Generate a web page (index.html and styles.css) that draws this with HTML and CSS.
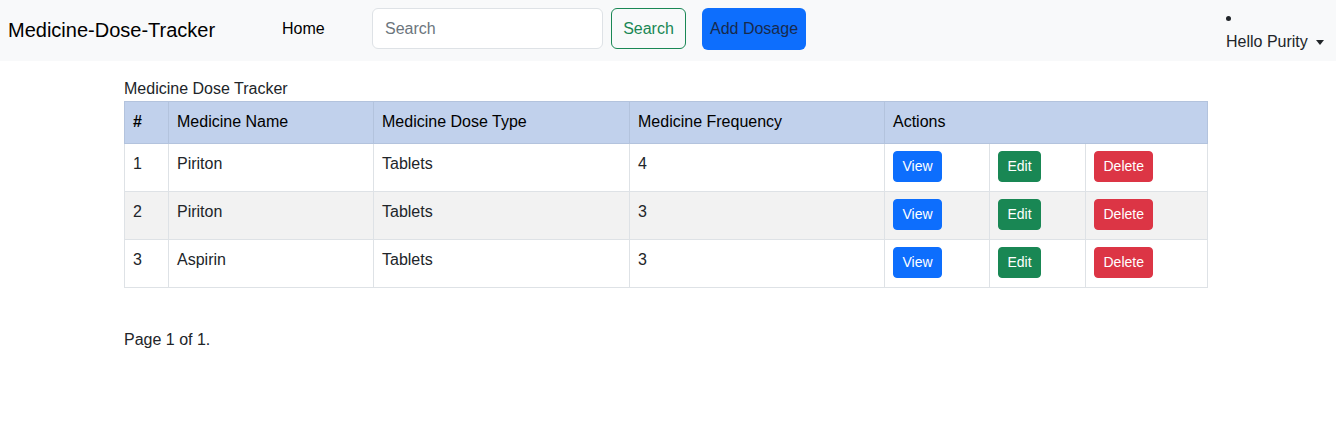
FILE: index.html
```html
<!DOCTYPE html>
<html lang="en">
<head>
<meta charset="utf-8">
<title>Medicine-Dose-Tracker</title>
<link rel="stylesheet" href="styles.css">
</head>
<body>
<nav class="navbar">
  <a class="brand" href="#">Medicine-Dose-Tracker</a>
  <a class="nav-link" href="#">Home</a>
  <form class="search-form">
    <input class="search-input" type="text" placeholder="Search">
    <button class="btn-outline" type="button">Search</button>
  </form>
  <a class="btn-add" href="#">Add Dosage</a>
  <ul class="user-menu">
    <li class="user-item"><a class="user-toggle" href="#">Hello Purity <span class="caret"></span></a></li>
  </ul>
</nav>
<main class="container">
  <div class="caption">Medicine Dose Tracker</div>
  <table class="table">
    <colgroup>
      <col class="c1"><col class="c2"><col class="c3"><col class="c4"><col class="c5"><col class="c6"><col class="c7">
    </colgroup>
    <thead>
      <tr>
        <th>#</th>
        <th>Medicine Name</th>
        <th>Medicine Dose Type</th>
        <th>Medicine Frequency</th>
        <th colspan="3">Actions</th>
      </tr>
    </thead>
    <tbody>
      <tr>
        <td>1</td><td>Piriton</td><td>Tablets</td><td>4</td>
        <td class="act"><a class="btn btn-view" href="#">View</a></td>
        <td class="act"><a class="btn btn-edit" href="#">Edit</a></td>
        <td class="act"><a class="btn btn-delete" href="#">Delete</a></td>
      </tr>
      <tr class="striped">
        <td>2</td><td>Piriton</td><td>Tablets</td><td>3</td>
        <td class="act"><a class="btn btn-view" href="#">View</a></td>
        <td class="act"><a class="btn btn-edit" href="#">Edit</a></td>
        <td class="act"><a class="btn btn-delete" href="#">Delete</a></td>
      </tr>
      <tr>
        <td>3</td><td>Aspirin</td><td>Tablets</td><td>3</td>
        <td class="act"><a class="btn btn-view" href="#">View</a></td>
        <td class="act"><a class="btn btn-edit" href="#">Edit</a></td>
        <td class="act"><a class="btn btn-delete" href="#">Delete</a></td>
      </tr>
    </tbody>
  </table>
  <p class="pager">Page 1 of 1.</p>
</main>
</body>
</html>
```
FILE: styles.css
```css
* { box-sizing: border-box; }
html, body { margin: 0; padding: 0; }
body {
  font-family: "Liberation Sans", Arial, sans-serif;
  font-size: 16px;
  line-height: 24px;
  color: #212529;
  background: #fff;
}
a { text-decoration: none; }

.navbar {
  height: 61px;
  background: #f8f9fa;
  display: flex;
  align-items: flex-start;
  padding: 0 0 0 8px;
}
.brand {
  font-size: 20px;
  line-height: 30px;
  color: #000;
  margin-top: 15px;
  width: 274px;
}
.nav-link {
  color: #000;
  margin-top: 17px;
  width: 90px;
}
.search-form {
  display: flex;
  gap: 8px;
  margin-top: 8px;
}
.search-input {
  width: 231px;
  height: 41px;
  border: 1px solid #dee2e6;
  border-radius: 6px;
  background: #fff;
  padding: 0 12px;
  font: inherit;
  color: #212529;
}
.search-input::placeholder { color: #6c757d; }
.btn-outline {
  height: 41px;
  width: 75px;
  border: 1px solid #198754;
  border-radius: 6px;
  background: transparent;
  color: #198754;
  font: inherit;
  padding: 0;
}
.btn-add {
  margin-top: 8px;
  margin-left: 16px;
  height: 42px;
  width: 104px;
  background: #0d6efd;
  border-radius: 6px;
  color: #182a4d;
  display: flex;
  align-items: center;
  justify-content: center;
}
.user-menu {
  margin: 0 0 0 auto;
  padding: 0;
  width: 110px;
  list-style: none;
}
.user-item {
  position: relative;
  margin-top: 30px;
}
.user-item::before {
  content: "";
  position: absolute;
  left: 0;
  top: -14px;
  width: 5px;
  height: 5px;
  border-radius: 50%;
  background: #212529;
}
.user-toggle {
  color: #212529;
  display: inline-flex;
  align-items: center;
}
.caret {
  display: inline-block;
  margin-left: 8px;
  width: 0;
  height: 0;
  border-left: 4px solid transparent;
  border-right: 4px solid transparent;
  border-top: 5px solid #212529;
}

.container {
  width: 1084px;
  margin-left: 124px;
  padding-top: 16px;
}
.caption {
  line-height: 24px;
}
.table {
  width: 1084px;
  border-collapse: collapse;
  table-layout: fixed;
}
.c1 { width: 44px; }
.c2 { width: 205px; }
.c3 { width: 256px; }
.c4 { width: 255px; }
.c5 { width: 105px; }
.c6 { width: 96px; }
.c7 { width: 122px; }
.table th, .table td {
  border: 1px solid #dee2e6;
  padding: 8px;
  text-align: left;
  vertical-align: top;
}
.table th {
  background: #c1d1ec;
  border-color: #b3c3dd;
  font-weight: normal;
  color: #000;
  height: 42px;
}
.table th:first-child { font-weight: bold; }
.table td { height: 48px; }
.table td.act { padding-top: 7px; padding-bottom: 9px; }
.striped td { background: #f2f2f2; }

.btn {
  display: inline-block;
  font-size: 14px;
  line-height: 21px;
  padding: 4px 8.5px;
  border: 1px solid transparent;
  border-radius: 4px;
  color: #fff;
}
.btn-view { background: #0d6efd; border-color: #0d6efd; }
.btn-edit { background: #198754; border-color: #198754; }
.btn-delete { background: #dc3545; border-color: #dc3545; }

.pager {
  margin: 40px 0 0;
}
```
